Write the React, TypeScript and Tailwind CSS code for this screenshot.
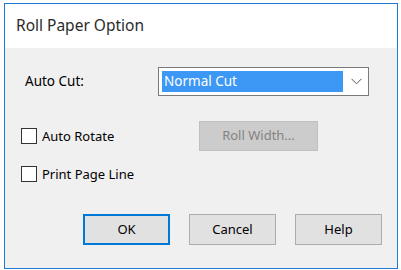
import React from "react";

const font = { fontFamily: '"Noto Sans", "Open Sans", sans-serif' };

function Checkbox({ label }: { label: string }) {
  return (
    <div className="flex items-center">
      <div className="w-[16px] h-[16px] border border-[#333333] bg-white" />
      <span className="ml-[5px] text-[13px] text-black leading-none">{label}</span>
    </div>
  );
}

function Btn({ label, primary }: { label: string; primary?: boolean }) {
  return (
    <div
      className={
        "w-[87px] h-[31px] flex items-center justify-center bg-[#e1e1e1] text-[13px] text-black " +
        (primary ? "border-2 border-[#0078d7]" : "border border-[#adadad]")
      }
    >
      {label}
    </div>
  );
}

export default function App() {
  return (
    <div className="w-[401px] h-[270px] bg-white pt-[3px] pl-[4px]" style={font}>
      <div className="w-[394px] h-[266px] border border-[#1e7bd6] flex flex-col bg-[#f0f0f0]">
        <div className="h-[44px] bg-white flex items-center pl-[11px] text-[15.5px] text-[#2b2b2b]">
          Roll Paper Option
        </div>
        <div className="flex flex-col">
          <div className="mt-[19px] h-[29px] flex items-center pl-[20px]">
            <span className="w-[133px] text-[13.5px] text-black">Auto Cut:</span>
            <div className="w-[211px] h-[29px] border border-[#7a7a7a] bg-white flex items-center pl-[3px] pr-[6px]">
              <div className="w-[181px] h-[21px] bg-[#3c97f5] text-white text-[13.5px] flex items-center pl-[2px]">
                Normal Cut
              </div>
              <div className="flex-1 flex justify-end">
                <svg width="11" height="7" viewBox="0 0 11 7">
                  <path d="M0.5 0.8 L5.5 5.8 L10.5 0.8" fill="none" stroke="#555" strokeWidth="1" />
                </svg>
              </div>
            </div>
          </div>
          <div className="mt-[25px] h-[30px] flex items-center pl-[16px]">
            <div className="w-[178px]">
              <Checkbox label="Auto Rotate" />
            </div>
            <div className="w-[119px] h-[30px] bg-[#cccccc] border border-[#bfbfbf] flex items-center justify-center text-[13px] text-[#838383]">
              Roll Width...
            </div>
          </div>
          <div className="mt-[14px] h-[18px] flex items-center pl-[16px]">
            <Checkbox label="Print Page Line" />
          </div>
          <div className="mt-[31px] flex pl-[78px] gap-[19px]">
            <Btn label="OK" primary />
            <Btn label="Cancel" />
            <Btn label="Help" />
          </div>
        </div>
      </div>
    </div>
  );
}
